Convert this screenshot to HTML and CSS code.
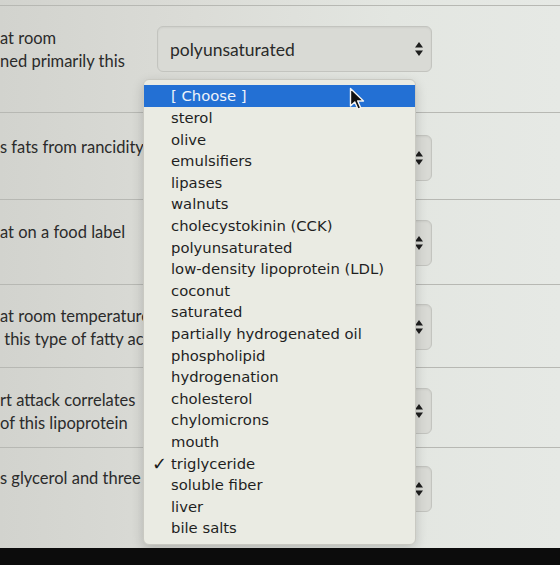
FILE: index.html
```html
<!DOCTYPE html>
<html lang="en">
<head>
  <meta charset="UTF-8">
  <title>Quiz - Lipids</title>
  <link rel="stylesheet" href="styles.css">
</head>
<body>

  <div class="screen">
      <div class="quiz">
          <div class="row row-1">
              <div class="question">
                  <span>at room</span>
                  <span>ned primarily this</span>
              </div>
              <div class="select">
                  <span class="value">polyunsaturated</span>
                  <svg class="arrows" width="8" height="14" viewBox="0 0 8 14"><path d="M4 0 L8 5.5 L0 5.5 Z M0 8.5 L8 8.5 L4 14 Z" fill="#1e1e1e"/></svg>
              </div>
          </div>

          <div class="row row-2">
              <div class="question">
                  <span>s fats from rancidity</span>
              </div>
              <div class="select">
                  <span class="value"></span>
                  <svg class="arrows" width="8" height="14" viewBox="0 0 8 14"><path d="M4 0 L8 5.5 L0 5.5 Z M0 8.5 L8 8.5 L4 14 Z" fill="#1e1e1e"/></svg>
              </div>
          </div>

          <div class="row row-3">
              <div class="question">
                  <span>at on a food label</span>
              </div>
              <div class="select">
                  <span class="value"></span>
                  <svg class="arrows" width="8" height="14" viewBox="0 0 8 14"><path d="M4 0 L8 5.5 L0 5.5 Z M0 8.5 L8 8.5 L4 14 Z" fill="#1e1e1e"/></svg>
              </div>
          </div>

          <div class="row row-4">
              <div class="question">
                  <span>at room temperature</span>
                  <span>&nbsp;this type of fatty acid</span>
              </div>
              <div class="select">
                  <span class="value"></span>
                  <svg class="arrows" width="8" height="14" viewBox="0 0 8 14"><path d="M4 0 L8 5.5 L0 5.5 Z M0 8.5 L8 8.5 L4 14 Z" fill="#1e1e1e"/></svg>
              </div>
          </div>

          <div class="row row-5">
              <div class="question">
                  <span>rt attack correlates</span>
                  <span>of this lipoprotein</span>
              </div>
              <div class="select">
                  <span class="value"></span>
                  <svg class="arrows" width="8" height="14" viewBox="0 0 8 14"><path d="M4 0 L8 5.5 L0 5.5 Z M0 8.5 L8 8.5 L4 14 Z" fill="#1e1e1e"/></svg>
              </div>
          </div>

          <div class="row row-6">
              <div class="question">
                  <span>s glycerol and three</span>
              </div>
              <div class="select">
                  <span class="value"></span>
                  <svg class="arrows" width="8" height="14" viewBox="0 0 8 14"><path d="M4 0 L8 5.5 L0 5.5 Z M0 8.5 L8 8.5 L4 14 Z" fill="#1e1e1e"/></svg>
              </div>
          </div>
      </div>

      <ul class="menu">
          <li class="highlight">[ Choose ]</li>
          <li>sterol</li>
          <li>olive</li>
          <li>emulsifiers</li>
          <li>lipases</li>
          <li>walnuts</li>
          <li>cholecystokinin (CCK)</li>
          <li>polyunsaturated</li>
          <li>low-density lipoprotein (LDL)</li>
          <li>coconut</li>
          <li>saturated</li>
          <li>partially hydrogenated oil</li>
          <li>phospholipid</li>
          <li>hydrogenation</li>
          <li>cholesterol</li>
          <li>chylomicrons</li>
          <li>mouth</li>
          <li class="checked"><span class="check">✓</span>triglyceride</li>
          <li>soluble fiber</li>
          <li>liver</li>
          <li>bile salts</li>
      </ul>

      <svg class="cursor" width="17" height="25" viewBox="0 0 17 25">
          <path d="M1.5 1.5 L1.5 19 L5.8 15 L9 22.2 L11.8 21 L8.7 14 L14.5 14 Z" fill="#111" stroke="#f4f4f4" stroke-width="1.4" stroke-linejoin="round"/>
      </svg>
  </div>

  <div class="bezel"></div>

</body>
</html>
```

FILE: styles.css
```css
* {
  margin: 0;
  padding: 0;
  box-sizing: border-box;
}

body {
  font-family: Lato, "Open Sans", sans-serif;
  font-size: 16.5px;
  color: #2b2b2b;
  background-color: #0c0c0c;
  width: 560px;
  height: 565px;
  overflow: hidden;
}

.screen {
  position: relative;
  height: 548px;
  overflow: hidden;
  background: linear-gradient(90deg, #d2d3ce 0%, #dbdcd7 35%, #e3e6e1 70%, #e6e9e5 100%);
}

.quiz {
  padding-top: 5px;
}

.row {
  display: flex;
  align-items: flex-start;
  padding-top: 20px;
  border-top: 1px solid #b7b8b3;
}

.row-1 { height: 107px; }
.row-2 { height: 87px; padding-top: 22px; }
.row-3 { height: 85px; }
.row-4 { height: 83px; padding-top: 19px; }
.row-5 { height: 80px; }
.row-6 { height: 101px; padding-top: 18px; }

.question {
  width: 157px;
  flex-shrink: 0;
  line-height: 23px;
  padding-top: 1px;
  overflow: hidden;
}

.question span {
  display: block;
  white-space: nowrap;
}

.select {
  width: 275px;
  height: 46px;
  display: flex;
  align-items: center;
  justify-content: space-between;
  padding: 0 8px 0 12px;
  background-color: #d9dad5;
  border: 1px solid #c3c4bf;
  border-radius: 6px;
  box-shadow: inset 0 1px 2px rgba(0, 0, 0, 0.05);
}

.select .value {
  font-size: 17.5px;
  color: #2a2a2a;
}

.menu {
  position: absolute;
  left: 143px;
  top: 79px;
  width: 273px;
  padding: 5px 0;
  list-style: none;
  font-family: "DejaVu Sans", Verdana, sans-serif;
  font-size: 14.8px;
  background-color: #eaebe3;
  border: 1px solid #c9c9c2;
  border-radius: 6px;
  box-shadow: 0 4px 12px rgba(0, 0, 0, 0.18);
}

.menu li {
  position: relative;
  height: 21.6px;
  line-height: 21.6px;
  padding-left: 27px;
  white-space: nowrap;
  color: #1f1f1f;
}

.menu li.highlight {
  height: 22px;
  background-color: #2370d4;
  color: #eef3fa;
}

.menu .check {
  position: absolute;
  left: 8px;
  top: 0;
  font-size: 18px;
  font-weight: bold;
  color: #1a1a1a;
}

.cursor {
  position: absolute;
  left: 349px;
  top: 87px;
}

.bezel {
  height: 17px;
  background-color: #0c0c0c;
}
```
